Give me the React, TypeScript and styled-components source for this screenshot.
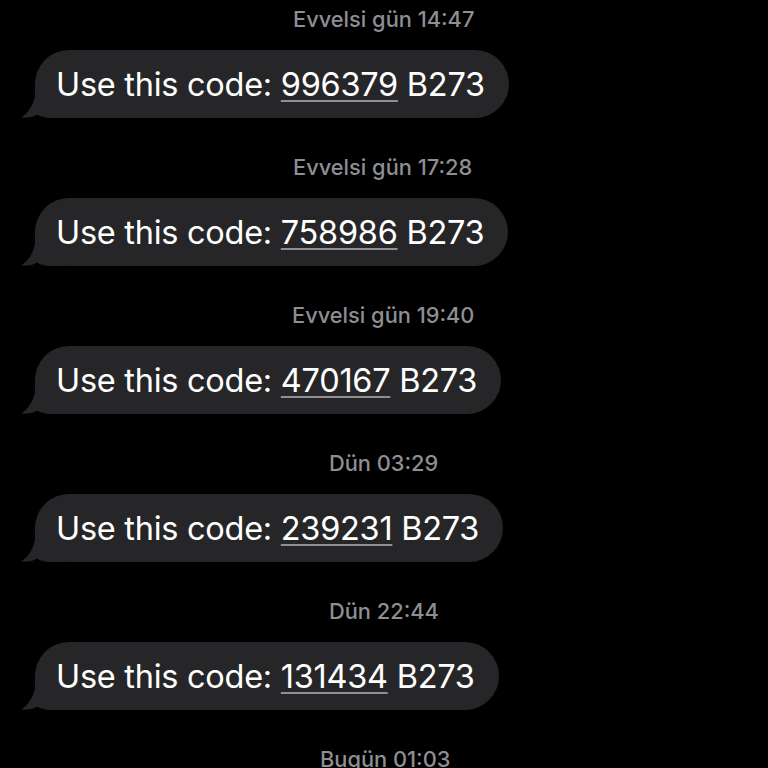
import * as React from "react";
import styled, { createGlobalStyle } from "styled-components";

const GlobalStyle = createGlobalStyle`
  html, body {
    margin: 0;
    padding: 0;
    background: #000;
  }
  body {
    font-family: Inter, "Liberation Sans", sans-serif;
    -webkit-font-smoothing: antialiased;
  }
`;

const Thread = styled.div`
  width: 768px;
  height: 768px;
  overflow: hidden;
  background: #000;
  box-sizing: border-box;
  padding-top: 6px;
  display: flex;
  flex-direction: column;
`;

const Block = styled.div`
  display: flex;
  flex-direction: column;
  align-items: flex-start;
  padding-bottom: 36px;
`;

const Stamp = styled.div<{ $x: number }>`
  align-self: stretch;
  height: 26px;
  line-height: 26px;
  padding-left: ${(p) => p.$x}px;
  font-size: 21.8px;
  font-weight: 500;
  color: #8e8e93;
  margin-bottom: 18px;
  white-space: nowrap;
`;

const Bubble = styled.div`
  position: relative;
  margin-left: 35px;
  height: 68px;
  box-sizing: border-box;
  padding: 0 24px 0 21px;
  display: flex;
  align-items: center;
  background: #262628;
  border-radius: 34px;
  color: #fff;
  font-size: 32.5px;
  letter-spacing: -0.27px;
  white-space: nowrap;
`;

const Tail = styled.svg`
  position: absolute;
  left: -14px;
  bottom: 0;
  width: 44px;
  height: 36px;
`;

const Code = styled.span`
  text-decoration: underline;
  text-decoration-color: #8e8e93;
  text-decoration-thickness: 1.5px;
  text-underline-offset: 4px;
`;

const messages = [
  { when: "Evvelsi gün 14:47", x: 293, code: "996379" },
  { when: "Evvelsi gün 17:28", x: 293, code: "758986" },
  { when: "Evvelsi gün 19:40", x: 292, code: "470167" },
  { when: "Dün 03:29", x: 329, code: "239231" },
  { when: "Dün 22:44", x: 329, code: "131434" },
];

const BubbleTail = () => (
  <Tail viewBox="0 0 44 36">
    <path
      d="M14 0 L44 0 L44 36 L30 36 C24 36 19 34.5 16 32.5 C12 35 6 36.2 0 35.6 C7 31 12 24 14 14 Z"
      fill="#262628"
    />
  </Tail>
);

export default function App() {
  return (
    <>
      <GlobalStyle />
      <Thread>
        {messages.map((m) => (
          <Block key={m.when}>
            <Stamp $x={m.x}>{m.when}</Stamp>
            <Bubble>
              <BubbleTail />
              <span style={{ position: "relative" }}>
                Use this code: <Code>{m.code}</Code> B273
              </span>
            </Bubble>
          </Block>
        ))}
        <Block>
          <Stamp $x={320}>Bugün 01:03</Stamp>
        </Block>
      </Thread>
    </>
  );
}
